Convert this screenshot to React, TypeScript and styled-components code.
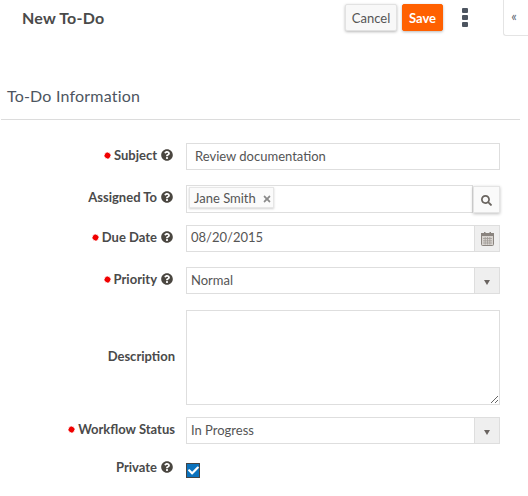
import React from "react";
import styled, { createGlobalStyle } from "styled-components";
import { FaQuestionCircle, FaSearch, FaTimes, FaCheck } from "react-icons/fa";

const Global = createGlobalStyle`
  html, body { margin: 0; padding: 0; background: #fff; overflow: hidden; }
  body { font-family: Lato, "Open Sans", sans-serif; color: #4a4a4a; }
  * { box-sizing: border-box; }
`;

const Page = styled.div`
  width: 528px;
  height: 496px;
  overflow: hidden;
`;

const Header = styled.header`
  height: 37px;
  display: flex;
  align-items: flex-start;
  padding-left: 22px;
`;

const Title = styled.h1`
  flex: 1;
  margin: 9px 0 0;
  font-size: 16px;
  line-height: 18px;
  font-weight: 700;
  letter-spacing: 0.2px;
  color: #4a4a4a;
`;

const ActionButton = styled.button<{ $primary?: boolean }>`
  height: 27px;
  margin-top: 4px;
  margin-right: 5px;
  width: ${(p) => (p.$primary ? "41px" : "52px")};
  padding: 0;
  font-family: inherit;
  font-size: 13px;
  font-weight: ${(p) => (p.$primary ? 700 : 400)};
  color: ${(p) => (p.$primary ? "#fff" : "#555")};
  background: ${(p) => (p.$primary ? "#ff6000" : "#f8f8f8")};
  border: 1px solid ${(p) => (p.$primary ? "#ff6000" : "#e2e2e2")};
  border-radius: 2px;
  box-shadow: 0 1px 3px rgba(0, 0, 0, 0.28);
`;

const Kebab = styled.div`
  width: 6px;
  margin: 8px 0 0 14px;
  display: flex;
  flex-direction: column;
  gap: 2px;
`;

const KebabDot = styled.span`
  width: 6px;
  height: 5px;
  border-radius: 1px;
  background: #4d5560;
`;

const Collapse = styled.div`
  width: 25px;
  height: 36px;
  margin-left: 35px;
  border: 1px solid #e4e4e4;
  border-top: 0;
  border-right: 0;
  border-bottom-left-radius: 3px;
  font-size: 13px;
  line-height: 33px;
  text-align: center;
  padding-right: 4px;
  color: #5b6670;
`;

const SectionTitle = styled.h2`
  margin: 49px 0 0 7px;
  font-size: 16px;
  line-height: 20px;
  font-weight: 400;
  letter-spacing: 0.2px;
  color: #4d5560;
`;

const Divider = styled.div`
  width: 519px;
  height: 1px;
  margin: 13px 0 0 1px;
  background: #dcdcdc;
`;

const Form = styled.div`
  width: 500px;
  padding-top: 23px;
`;

const Row = styled.div<{ $top?: number; $center?: boolean }>`
  display: grid;
  grid-template-columns: 176px 314px;
  column-gap: 10px;
  margin-top: ${(p) => p.$top ?? 0}px;
  align-items: ${(p) => (p.$center ? "center" : "start")};
`;

const Label = styled.label<{ $nudge?: number; $plain?: boolean }>`
  display: flex;
  justify-content: flex-end;
  align-items: center;
  gap: 5px;
  height: 20px;
  margin-top: ${(p) => p.$nudge ?? 2}px;
  padding-right: ${(p) => (p.$plain ? 1 : 3)}px;
  font-size: 13px;
  font-weight: 700;
  color: #4a4a4a;
  white-space: nowrap;
`;

const LabelText = styled.span`
  display: inline-flex;
  align-items: center;
  gap: 3px;
`;

const Help = styled(FaQuestionCircle)`
  width: 12px;
  height: 12px;
  margin-left: -1px;
  color: #4a4640;
  flex: none;
`;

const TextInput = styled.input`
  width: 100%;
  height: 27px;
  padding: 0 8px 2px;
  border: 1px solid #dedede;
  background: #fff;
  outline: 0;
  font-family: inherit;
  font-size: 13px;
  color: #555;
  border-radius: 0;
`;

const Area = styled.textarea`
  display: block;
  width: 100%;
  height: 95px;
  border: 1px solid #dedede;
  outline: 0;
  background: #fff;
  border-radius: 0;
`;

const Combo = styled.div`
  display: flex;
  height: 27px;
  border: 1px solid #dedede;
  background: #fff;
`;

const ComboValue = styled.div<{ $line?: number }>`
  flex: 1;
  padding-left: 4px;
  font-size: 13px;
  line-height: ${(p) => p.$line ?? 25}px;
  color: #555;
`;

const AddOn = styled.div`
  width: 25px;
  flex: none;
  display: flex;
  align-items: center;
  justify-content: center;
  background: #efefef;
  border-left: 1px solid #dedede;
`;

const Caret = styled.span`
  width: 0;
  height: 0;
  margin-top: 3px;
  border-left: 3px solid transparent;
  border-right: 3px solid transparent;
  border-top: 5px solid #6a6460;
`;

const LookupRow = styled.div`
  display: flex;
`;

const TagBox = styled.div`
  flex: 1;
  height: 28px;
  padding: 1px 2px;
  border: 1px solid #dedede;
  background: #fff;
  display: flex;
  align-items: flex-start;
`;

const Tag = styled.span`
  display: inline-flex;
  align-items: center;
  height: 21px;
  width: 85px;
  padding: 0 0 0 4px;
  gap: 6px;
  background: #fbfbfb;
  border: 1px solid #e6e6e6;
  box-shadow: 0 1px 2px rgba(0, 0, 0, 0.18);
  font-size: 13px;
  color: #555;
`;

const TagClose = styled(FaTimes)`
  width: 10px;
  height: 10px;
  margin-top: 2px;
  color: #8a8a8a;
`;

const SearchButton = styled.button`
  width: 27px;
  height: 27px;
  margin-top: 1px;
  padding: 2px 0 0;
  display: flex;
  align-items: center;
  justify-content: center;
  background: #fafafa;
  border: 1px solid #e4e4e4;
  box-shadow: 0 1px 3px rgba(0, 0, 0, 0.25);
  color: #6a6560;
`;

const Check = styled.span`
  display: flex;
  align-items: center;
  justify-content: center;
  width: 14px;
  height: 15px;
  margin-top: 6px;
  background: #0b72bd;
  border: 1px solid #444;
  color: #fff;
`;

const Star = () => (
  <svg width="7" height="7" viewBox="0 0 16 16" aria-hidden="true">
    <path
      fill="#f00000"
      d="M8 0l1.5 2.4 2.5-1.2.4 2.8 2.8.4-1.2 2.5L16 8l-2.4 1.5 1.2 2.5-2.8.4-.4 2.8-2.5-1.2L8 16l-1.5-2.4-2.5 1.2-.4-2.8-2.8-.4 1.2-2.5L0 8l2.4-1.5L1.2 4l2.8-.4.4-2.8 2.5 1.2z"
    />
  </svg>
);

const Calendar = () => (
  <svg width="13" height="14" viewBox="0 0 13 14" aria-hidden="true">
    <rect x="0.5" y="1.5" width="12" height="12" rx="1" fill="#d8d4d0" stroke="#8a847f" />
    <rect x="0" y="1" width="13" height="3" fill="#8a847f" />
    <rect x="3" y="0" width="1.5" height="2" fill="#8a847f" />
    <rect x="8.5" y="0" width="1.5" height="2" fill="#8a847f" />
    <path d="M2 6.5h9M2 8.8h9M2 11h9M4.2 5v7.5M6.5 5v7.5M8.8 5v7.5" stroke="#a09a95" strokeWidth="0.8" fill="none" />
  </svg>
);

const FieldLabel = ({
  text,
  required,
  help = true,
  nudge,
}: {
  text: string;
  required?: boolean;
  help?: boolean;
  nudge?: number;
}) => (
  <Label $nudge={nudge} $plain={!help}>
    <LabelText>
      {required && <Star />}
      {text}
    </LabelText>
    {help && <Help />}
  </Label>
);

export default function App() {
  return (
    <Page>
      <Global />
      <Header>
        <Title>New To-Do</Title>
        <ActionButton>Cancel</ActionButton>
        <ActionButton $primary>Save</ActionButton>
        <Kebab>
          <KebabDot />
          <KebabDot />
          <KebabDot />
        </Kebab>
        <Collapse>«</Collapse>
      </Header>
      <SectionTitle>To-Do Information</SectionTitle>
      <Divider />
      <Form>
        <Row>
          <FieldLabel text="Subject" required />
          <TextInput readOnly value="Review documentation" />
        </Row>
        <Row $top={15}>
          <FieldLabel text="Assigned To" />
          <LookupRow>
            <TagBox>
              <Tag>
                Jane Smith
                <TagClose />
              </Tag>
            </TagBox>
            <SearchButton aria-label="Search">
              <FaSearch size={11} />
            </SearchButton>
          </LookupRow>
        </Row>
        <Row $top={12}>
          <FieldLabel text="Due Date" required />
          <Combo>
            <ComboValue $line={23}>08/20/2015</ComboValue>
            <AddOn>
              <Calendar />
            </AddOn>
          </Combo>
        </Row>
        <Row $top={15}>
          <FieldLabel text="Priority" required />
          <Combo>
            <ComboValue>Normal</ComboValue>
            <AddOn>
              <Caret />
            </AddOn>
          </Combo>
        </Row>
        <Row $top={16} $center>
          <FieldLabel text="Description" help={false} nudge={-4} />
          <Area readOnly />
        </Row>
        <Row $top={12}>
          <FieldLabel text="Workflow Status" required help={false} />
          <Combo>
            <ComboValue>In Progress</ComboValue>
            <AddOn>
              <Caret />
            </AddOn>
          </Combo>
        </Row>
        <Row $top={13}>
          <FieldLabel text="Private" nudge={0} />
          <Check>
            <FaCheck size={11} />
          </Check>
        </Row>
      </Form>
    </Page>
  );
}
